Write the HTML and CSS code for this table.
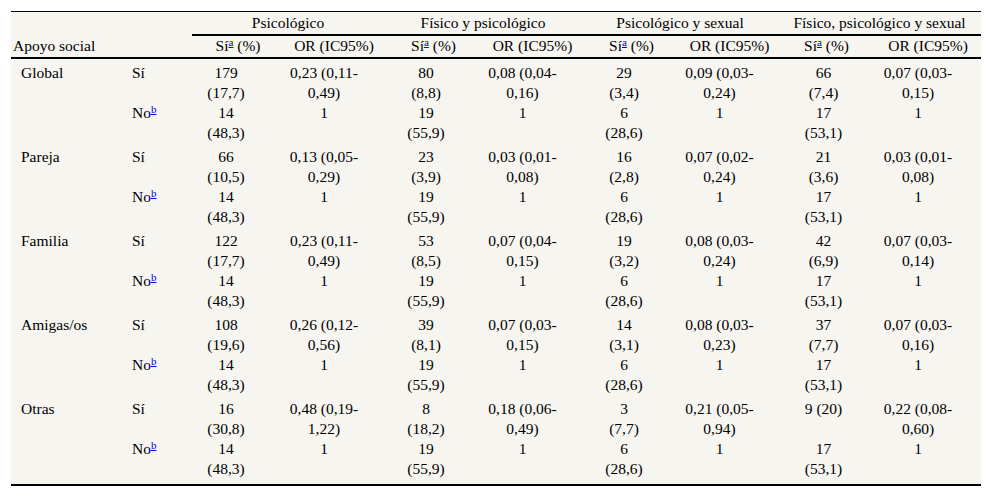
FILE: index.html
```html
<!DOCTYPE html>
<html lang="es">
<head>
<meta charset="utf-8">
<title>Apoyo social</title>
<link rel="stylesheet" href="styles.css">
</head>
<body>
<div class="wrap">
<table class="tbl">
  <colgroup>
    <col class="c-label"><col class="c-yn">
    <col class="c-a"><col class="c-b"><col class="c-c"><col class="c-d">
    <col class="c-e"><col class="c-f"><col class="c-g"><col class="c-h">
  </colgroup>
  <thead>
    <tr class="h1">
      <th></th><th></th>
      <th colspan="2" class="grp">Psicológico</th>
      <th colspan="2" class="grp">Físico y psicológico</th>
      <th colspan="2" class="grp">Psicológico y sexual</th>
      <th colspan="2" class="grp">Físico, psicológico y sexual</th>
    </tr>
    <tr class="h2">
      <th class="lbl">Apoyo social</th><th></th>
      <th>Sí<sup><a href="#">a</a></sup> (%)</th><th>OR (IC95%)</th>
      <th>Sí<sup><a href="#">a</a></sup> (%)</th><th>OR (IC95%)</th>
      <th>Sí<sup><a href="#">a</a></sup> (%)</th><th>OR (IC95%)</th>
      <th>Sí<sup><a href="#">a</a></sup> (%)</th><th>OR (IC95%)</th>
    </tr>
  </thead>
  <tbody>
    <tr class="first">
      <td>Global</td><td>Sí</td>
      <td>179 (17,7)</td><td>0,23 (0,11-<wbr>0,49)</td>
      <td>80 (8,8)</td><td>0,08 (0,04-<wbr>0,16)</td>
      <td>29 (3,4)</td><td>0,09 (0,03-<wbr>0,24)</td>
      <td>66 (7,4)</td><td>0,07 (0,03-<wbr>0,15)</td>
    </tr>
    <tr>
      <td></td><td>No<sup><a href="#">b</a></sup></td>
      <td>14 (48,3)</td><td>1</td>
      <td>19 (55,9)</td><td>1</td>
      <td>6 (28,6)</td><td>1</td>
      <td>17 (53,1)</td><td>1</td>
    </tr>
    <tr class="first">
      <td>Pareja</td><td>Sí</td>
      <td>66 (10,5)</td><td>0,13 (0,05-<wbr>0,29)</td>
      <td>23 (3,9)</td><td>0,03 (0,01-<wbr>0,08)</td>
      <td>16 (2,8)</td><td>0,07 (0,02-<wbr>0,24)</td>
      <td>21 (3,6)</td><td>0,03 (0,01-<wbr>0,08)</td>
    </tr>
    <tr>
      <td></td><td>No<sup><a href="#">b</a></sup></td>
      <td>14 (48,3)</td><td>1</td>
      <td>19 (55,9)</td><td>1</td>
      <td>6 (28,6)</td><td>1</td>
      <td>17 (53,1)</td><td>1</td>
    </tr>
    <tr class="first">
      <td>Familia</td><td>Sí</td>
      <td>122 (17,7)</td><td>0,23 (0,11-<wbr>0,49)</td>
      <td>53 (8,5)</td><td>0,07 (0,04-<wbr>0,15)</td>
      <td>19 (3,2)</td><td>0,08 (0,03-<wbr>0,24)</td>
      <td>42 (6,9)</td><td>0,07 (0,03-<wbr>0,14)</td>
    </tr>
    <tr>
      <td></td><td>No<sup><a href="#">b</a></sup></td>
      <td>14 (48,3)</td><td>1</td>
      <td>19 (55,9)</td><td>1</td>
      <td>6 (28,6)</td><td>1</td>
      <td>17 (53,1)</td><td>1</td>
    </tr>
    <tr class="first">
      <td>Amigas/os</td><td>Sí</td>
      <td>108 (19,6)</td><td>0,26 (0,12-<wbr>0,56)</td>
      <td>39 (8,1)</td><td>0,07 (0,03-<wbr>0,15)</td>
      <td>14 (3,1)</td><td>0,08 (0,03-<wbr>0,23)</td>
      <td>37 (7,7)</td><td>0,07 (0,03-<wbr>0,16)</td>
    </tr>
    <tr>
      <td></td><td>No<sup><a href="#">b</a></sup></td>
      <td>14 (48,3)</td><td>1</td>
      <td>19 (55,9)</td><td>1</td>
      <td>6 (28,6)</td><td>1</td>
      <td>17 (53,1)</td><td>1</td>
    </tr>
    <tr class="first">
      <td>Otras</td><td>Sí</td>
      <td>16 (30,8)</td><td>0,48 (0,19-<wbr>1,22)</td>
      <td>8 (18,2)</td><td>0,18 (0,06-<wbr>0,49)</td>
      <td>3 (7,7)</td><td>0,21 (0,05-<wbr>0,94)</td>
      <td>9 (20)</td><td>0,22 (0,08-<wbr>0,60)</td>
    </tr>
    <tr class="last">
      <td></td><td>No<sup><a href="#">b</a></sup></td>
      <td>14 (48,3)</td><td>1</td>
      <td>19 (55,9)</td><td>1</td>
      <td>6 (28,6)</td><td>1</td>
      <td>17 (53,1)</td><td>1</td>
    </tr>
  </tbody>
</table>
</div>
</body>
</html>
```
FILE: styles.css
```css
html, body {
  margin: 0;
  padding: 0;
  background: #ffffff;
  font-family: "Liberation Serif", "Times New Roman", serif;
}

.wrap {
  padding: 11px 11px 0 11px;
}

.tbl {
  width: 970px;
  table-layout: fixed;
  border-collapse: separate;
  border-spacing: 0;
  background: #f7f5f0;
  border-top: 1px solid #000;
  border-bottom: 2px solid #000;
  font-family: "Liberation Serif", "Times New Roman", serif;
  font-size: 15.5px;
  line-height: 20px;
  color: #000;
}

.c-label { width: 116px; }
.c-yn { width: 65px; }
.c-a { width: 92px; }
.c-b { width: 100px; }
.c-c { width: 99px; }
.c-d { width: 99px; }
.c-e { width: 99px; }
.c-f { width: 97px; }
.c-g { width: 97px; }
.c-h { width: 106px; }

th {
  font-weight: normal;
  text-align: center;
  padding: 0;
  white-space: nowrap;
}

.h1 th {
  padding: 1px 0 1px 0;
}

.h1 th.grp {
  border-bottom: 2px solid #000;
}

.h2 th {
  padding: 0 0 1px 0;
  border-bottom: 2px solid #000;
}

.h2 th.lbl {
  text-align: left;
  padding-left: 2px;
}

td {
  vertical-align: top;
  text-align: center;
  padding: 0;
}

td:nth-child(1) {
  text-align: left;
  padding-left: 10px;
}

td:nth-child(2) {
  text-align: left;
  padding-left: 5px;
}

td:nth-child(3) {
  padding: 0 38px 0 14px;
}

td:nth-child(5),
td:nth-child(7) {
  padding: 0 37px 0 22px;
}

td:nth-child(9) {
  padding: 0 31px 0 25px;
}

td:nth-child(4),
td:nth-child(6),
td:nth-child(8),
td:nth-child(10) {
  padding: 0 21px 0 1px;
}

tr.first td {
  padding-top: 4px;
}

tr.last td {
  padding-bottom: 5px;
}

sup {
  font-size: 11px;
  line-height: 0;
  vertical-align: 5px;
}

sup a {
  color: #0000ee;
  text-decoration: underline;
}
```
